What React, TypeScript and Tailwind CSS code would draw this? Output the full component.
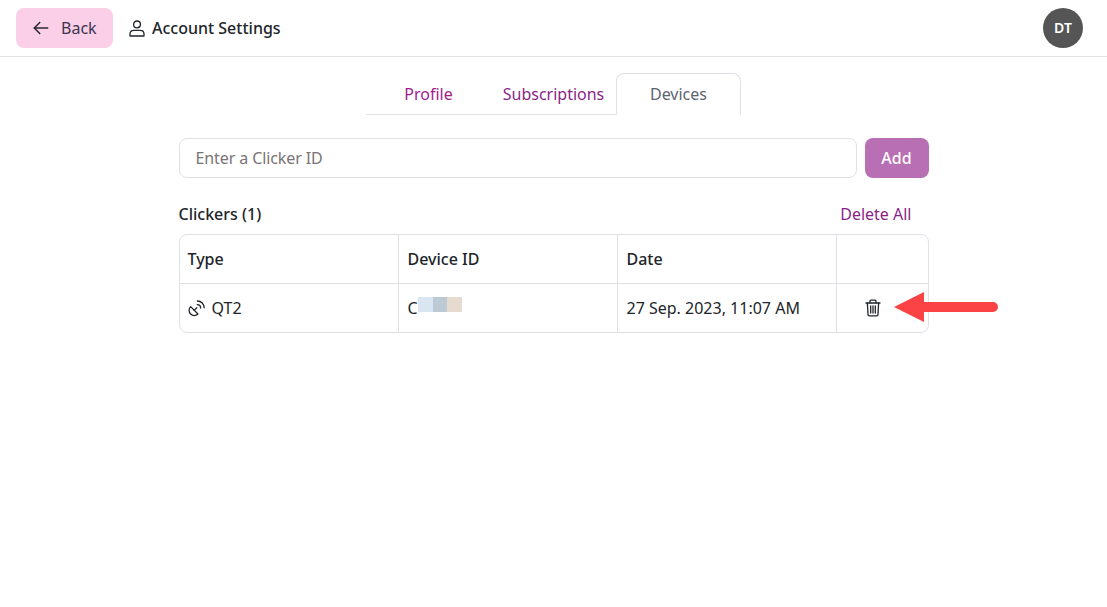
import React from 'react';

const Back = () => (
  <svg viewBox="0 0 24 24" className="w-5 h-5" fill="none" stroke="currentColor" strokeWidth="1.8" strokeLinecap="round" strokeLinejoin="round">
    <path d="M20 12H4" />
    <path d="M10.5 5.5 4 12l6.5 6.5" />
  </svg>
);

const User = () => (
  <svg viewBox="0 0 16 17" className="w-4 h-[17px]" fill="none" stroke="currentColor" strokeWidth="1.3">
    <circle cx="8" cy="4.4" r="3.4" />
    <path d="M1 14c0-2.4 1.8-3.6 3.8-3.6h6.4c2 0 3.8 1.2 3.8 3.6v2H1z" strokeLinejoin="round" />
  </svg>
);

const Clicker = () => (
  <svg viewBox="0 0 17 17" className="w-[17px] h-[17px]" fill="none" stroke="currentColor" strokeWidth="1.3" strokeLinecap="round" strokeLinejoin="round">
    <path d="M2.6 6.6 10 14a5.2 5.2 0 0 1-7.4-7.4z" />
    <path d="M6.2 10.4 8.8 7.8" />
    <path d="M9.2 4.6a3.4 3.4 0 0 1 3.4 3.4" />
    <path d="M9.4 1a6.8 6.8 0 0 1 6.8 6.8" />
  </svg>
);

const Trash = () => (
  <svg viewBox="0 0 16 18" className="w-4 h-[18px]" fill="none" stroke="currentColor" strokeWidth="1.3" strokeLinecap="round" strokeLinejoin="round">
    <path d="M1 4h14" />
    <path d="M5 3.8V2.2c0-.6.4-1.1 1-1.1h4c.6 0 1 .5 1 1.1v1.6" />
    <path d="M2.4 4.2 3 15.4c0 .8.6 1.4 1.3 1.4h7.4c.7 0 1.3-.6 1.3-1.4l.6-11.2" />
    <path d="M5.7 7v7M8 7v7M10.3 7v7" />
  </svg>
);

const Arrow = () => (
  <svg width="106" height="32" viewBox="0 0 106 32" className="absolute left-[894px] top-[291px]">
    <path d="M0 16 30 1V11H99a5 5 0 0 1 0 10H30V31z" fill="#fb4346" />
  </svg>
);

export default function App() {
  return (
    <div className="relative min-h-[607px] bg-white text-[#212529] font-['Noto_Sans','Open_Sans',sans-serif] overflow-hidden">
      <header className="h-[57px] border-b border-[#dee2e6] flex items-center justify-between pl-4 pr-6">
        <div className="flex items-center">
          <button className="w-[97px] h-10 rounded-lg bg-[#fbcfe8] flex items-center pl-[15px] gap-[10px] text-base text-[#3a3550]">
            <span className="text-[#27272a]"><Back /></span>
            <span>Back</span>
          </button>
          <div className="ml-4 flex items-center gap-[7px] text-base font-medium text-[#212529]">
            <User />
            <span>Account Settings</span>
          </div>
        </div>
        <div className="w-10 h-10 rounded-full bg-[#555555] text-white text-sm font-semibold flex items-center justify-center">DT</div>
      </header>

      <div className="w-[750px] mx-auto">
        <nav className="mt-4 h-[42px] flex justify-center text-base">
          <div className="w-[125px] border-b border-[#dee2e6] flex items-center justify-center text-[#a21c8f]">Profile</div>
          <div className="w-[125px] border-b border-[#dee2e6] flex items-center justify-center text-[#8b1f87]">Subscriptions</div>
          <div className="w-[125px] border border-b-0 border-[#dee2e6] rounded-t-lg pb-px flex items-center justify-center text-[#5c6470]">Devices</div>
        </nav>

        <div className="mt-[23px] flex gap-2">
          <input
            placeholder="Enter a Clicker ID"
            className="flex-1 h-10 rounded-lg border border-[#dee2e6] px-4 text-base tracking-[-0.1px] outline-none placeholder:text-[#7a7475]"
          />
          <button className="w-16 h-10 rounded-lg bg-[#b86fb4] text-white text-base font-medium">Add</button>
        </div>

        <div className="mt-[25px] h-[22px] flex items-center justify-between pr-[17px]">
          <span className="text-base font-medium">Clickers (1)</span>
          <span className="text-base text-[#8b1f87]">Delete All</span>
        </div>

        <div className="mt-[9px] border border-[#dee2e6] rounded-lg grid grid-cols-[219px_219px_219px_1fr] text-base">
          <div className="h-[49px] px-2 flex items-center font-medium border-r border-b border-[#dee2e6]">Type</div>
          <div className="h-[49px] px-[9px] flex items-center font-medium border-r border-b border-[#dee2e6]">Device ID</div>
          <div className="h-[49px] px-[9px] flex items-center font-medium border-r border-b border-[#dee2e6]">Date</div>
          <div className="h-[49px] border-b border-[#dee2e6]" />
          <div className="h-[48px] px-2 flex items-center gap-[7px] border-r border-[#dee2e6]">
            <Clicker />
            <span>QT2</span>
          </div>
          <div className="h-[48px] px-[9px] flex items-center border-r border-[#dee2e6]">
            <span>C</span>
            <span className="w-[15px] h-[15px] bg-[#d9e5f0] -mt-2" />
            <span className="w-[14px] h-[15px] bg-[#bccad6] -mt-2" />
            <span className="w-[15px] h-[15px] bg-[#e6dbce] -mt-2" />
          </div>
          <div className="h-[48px] px-[9px] flex items-center border-r border-[#dee2e6]">27 Sep. 2023, 11:07 AM</div>
          <div className="h-[48px] pr-[18px] flex items-center justify-center"><Trash /></div>
        </div>
      </div>
      <Arrow />
    </div>
  );
}
